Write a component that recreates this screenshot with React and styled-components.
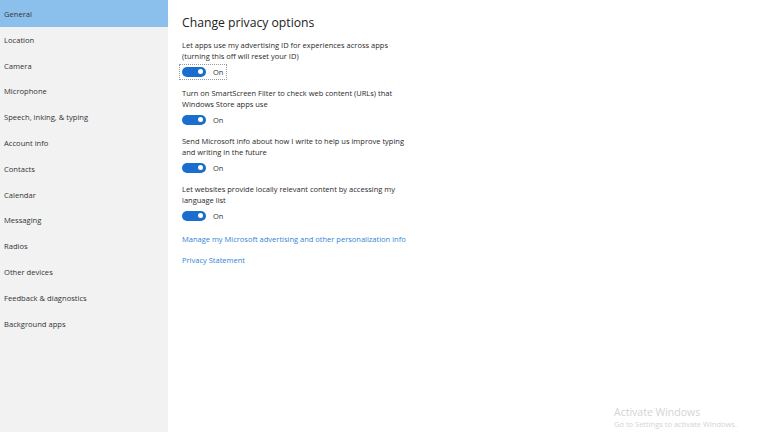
import React from 'react';
import styled, { createGlobalStyle } from 'styled-components';

const GlobalStyle = createGlobalStyle`
  html, body {
    margin: 0;
    padding: 0;
    background: #ffffff;
  }
  body {
    font-family: "Open Sans", "Noto Sans", sans-serif;
    color: #1f1f1f;
  }
`;

const Page = styled.div`
  display: flex;
  width: 768px;
  height: 432px;
  overflow: hidden;
  position: relative;
`;

const Sidebar = styled.nav`
  width: 168px;
  flex-shrink: 0;
  background: #f2f2f2;
  display: flex;
  flex-direction: column;
`;

const NavItem = styled.div`
  height: ${p => (p.active ? '27px' : '25.8px')};
  display: flex;
  align-items: center;
  padding-left: 4px;
  font-size: 7.6px;
  color: #333;
  background: ${p => (p.active ? '#8cc0ec' : 'transparent')};
`;

const Main = styled.main`
  flex: 1;
  padding: 14px 0 0 14px;
  display: flex;
  flex-direction: column;
`;

const Title = styled.h1`
  margin: 0 0 9px;
  font-size: 12.2px;
  font-weight: 400;
  color: #222;
`;

const Option = styled.div`
  display: flex;
  flex-direction: column;
  margin-bottom: 9.5px;
`;

const Desc = styled.p`
  margin: 0 0 2.5px;
  width: 229px;
  font-size: 7.5px;
  line-height: 11px;
  color: #2a2a2a;
`;

const ToggleRow = styled.div`
  display: inline-flex;
  align-self: flex-start;
  align-items: center;
  gap: 7px;
  padding: 2px 3px 2px 2px;
  margin-left: -2px;
  outline: ${p => (p.focused ? '1px dotted #9a9a9a' : 'none')};
`;

const Switch = styled.span`
  width: 24px;
  height: 10px;
  border-radius: 5px;
  background: #1a6fce;
  position: relative;
  &::after {
    content: '';
    position: absolute;
    right: 3px;
    top: 2.5px;
    width: 5px;
    height: 5px;
    border-radius: 50%;
    background: #fff;
  }
`;

const State = styled.span`
  font-size: 7.5px;
  color: #333;
`;

const Link = styled.a`
  font-size: 7.5px;
  color: #2f86d6;
  text-decoration: none;
  margin: ${p => (p.first ? '2px 0 11px' : '0')};
`;

const Watermark = styled.div`
  position: absolute;
  left: 614px;
  top: 406px;
  color: #d4d4d4;
  line-height: 12px;
`;

const WmTitle = styled.div`
  font-size: 10.5px;
`;

const WmSub = styled.div`
  font-size: 7.5px;
`;

const navItems = [
  'General', 'Location', 'Camera', 'Microphone', 'Speech, inking, & typing',
  'Account info', 'Contacts', 'Calendar', 'Messaging', 'Radios',
  'Other devices', 'Feedback & diagnostics', 'Background apps',
];

const options = [
  'Let apps use my advertising ID for experiences across apps (turning this off will reset your ID)',
  'Turn on SmartScreen Filter to check web content (URLs) that Windows Store apps use',
  'Send Microsoft info about how I write to help us improve typing and writing in the future',
  'Let websites provide locally relevant content by accessing my language list',
];

export default function App() {
  return (
    <Page>
      <GlobalStyle />
      <Sidebar>
        {navItems.map((n, i) => (
          <NavItem key={n} active={i === 0}>{n}</NavItem>
        ))}
      </Sidebar>
      <Main>
        <Title>Change privacy options</Title>
        {options.map((o, i) => (
          <Option key={i}>
            <Desc>{o}</Desc>
            <ToggleRow focused={i === 0}>
              <Switch />
              <State>On</State>
            </ToggleRow>
          </Option>
        ))}
        <Link first>Manage my Microsoft advertising and other personalization info</Link>
        <Link>Privacy Statement</Link>
      </Main>
      <Watermark>
        <WmTitle>Activate Windows</WmTitle>
        <WmSub>Go to Settings to activate Windows.</WmSub>
      </Watermark>
    </Page>
  );
}
